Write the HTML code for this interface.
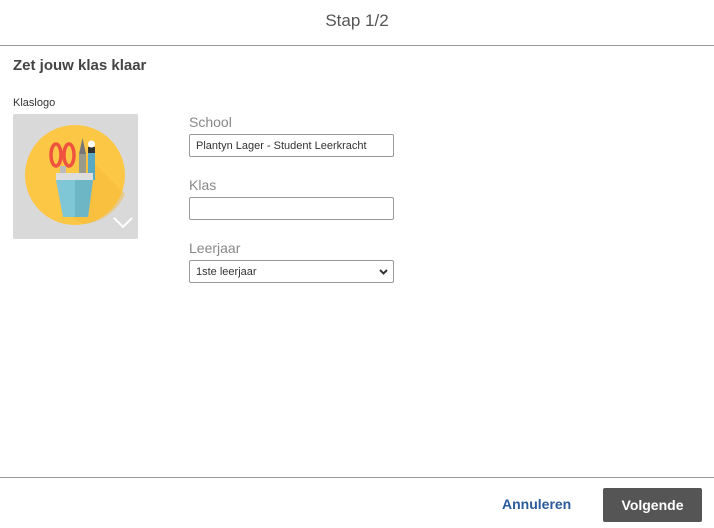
<!DOCTYPE html>
<html><head><meta charset="utf-8"><style>
body{margin:0;width:714px;height:528px;background:#fff;font-family:"Liberation Sans",sans-serif;position:relative;overflow:hidden;color:#444}
.a{position:absolute}
.hdr{top:11px;left:0;width:714px;text-align:center;font-size:17px;color:#555}
.line{left:0;width:714px;height:1px;background:#999}
.lbl{font-size:14px;color:#888}
.inp{border:1px solid #999;border-radius:2px;height:23px;width:205px;box-sizing:border-box;font-size:11px;color:#333;padding:5px 6px;white-space:nowrap;overflow:hidden}
</style></head><body>
<div class="a hdr">Stap 1/2</div>
<div class="a line" style="top:45px"></div>
<div class="a" style="left:13px;top:57px;font-size:15px;font-weight:bold;color:#444">Zet jouw klas klaar</div>
<div class="a" style="left:13px;top:97px;font-size:11px;color:#333">Klaslogo</div>
<div class="a" style="left:13px;top:114px;width:125px;height:125px;background:#d9d9d9;border-radius:2px">
<svg width="125" height="125" viewBox="0 0 125 125">
<circle cx="62" cy="61" r="50" fill="#fcc745"/>
<path d="M70 38 L112 80 A50 50 0 0 1 70 110 L60 104 Z" fill="#f5b93a" opacity=".5"/>
<ellipse cx="43" cy="41" rx="5" ry="11" fill="none" stroke="#ef5340" stroke-width="3.5"/>
<ellipse cx="56" cy="41" rx="5" ry="11" fill="none" stroke="#ef5340" stroke-width="3.5"/>
<rect x="47" y="52" width="6" height="10" fill="#bbb"/>
<rect x="66" y="40" width="7" height="26" fill="#9a9a8a"/>
<path d="M66 40 L69.5 24 L73 40 Z" fill="#777"/>
<rect x="75" y="36" width="7" height="30" fill="#5aa9c4"/>
<rect x="75" y="33" width="7" height="6" fill="#333"/>
<circle cx="78.5" cy="30" r="3.5" fill="#fff"/>
<rect x="43" y="59" width="37" height="7" fill="#ddd"/>
<path d="M43 66 L80 66 L75 103 L50 103 Z" fill="#7fc6d6"/>
<path d="M62 66 L80 66 L75 103 L62 103 Z" fill="#6cb6c6"/>
<path d="M101 104 L110 113 L119 104" fill="none" stroke="#fff" stroke-width="2"/>
</svg></div>
<div class="a lbl" style="left:189px;top:114px">School</div>
<div class="a inp" style="left:189px;top:134px">Plantyn Lager - Student Leerkracht</div>
<div class="a lbl" style="left:189px;top:177px">Klas</div>
<div class="a inp" style="left:189px;top:197px"></div>
<div class="a lbl" style="left:189px;top:240px">Leerjaar</div>
<div class="a inp" style="left:189px;top:260px">1ste leerjaar<svg class="a" style="right:5px;top:8px" width="9" height="6"><path d="M1 1 L4.5 4.5 L8 1" fill="none" stroke="#333" stroke-width="2"/></svg></div>
<div class="a line" style="top:477px"></div>
<div class="a" style="left:502px;top:496px;font-size:14px;font-weight:bold;color:#2a5b9a">Annuleren</div>
<div class="a" style="left:603px;top:488px;width:99px;height:34px;background:#555;border-radius:2px;color:#fff;font-size:14px;font-weight:bold;text-align:center;line-height:34px">Volgende</div>
</body></html>
